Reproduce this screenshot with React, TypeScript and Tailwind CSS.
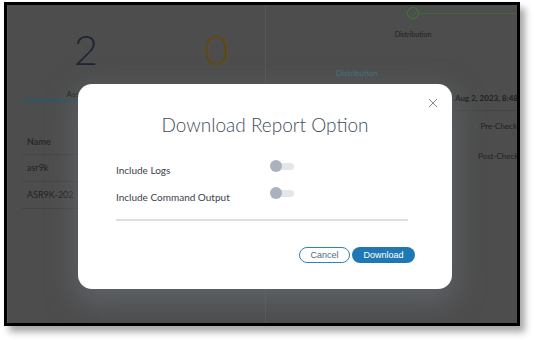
import React from "react";

const sans = { fontFamily: "Lato, 'Open Sans', sans-serif" };

function Toggle() {
  return (
    <div className="relative w-[24px] h-[12px] mb-[8px] flex items-center">
      <div className="absolute left-[4px] right-0 h-[7px] rounded-full bg-[#e3e6ea]" />
      <div className="relative w-[12px] h-[12px] rounded-full bg-[#aab3bd]" />
    </div>
  );
}

function CheckIcon({ size = 8, color = "#6fae4c" }: { size?: number; color?: string }) {
  return (
    <svg width={size} height={size} viewBox="0 0 24 24" fill="none" stroke={color} strokeWidth="2.6" strokeLinecap="round" strokeLinejoin="round">
      <path d="M20 6L9 17l-5-5" />
    </svg>
  );
}

export default function App() {
  return (
    <div className="w-[534px] h-[340px] bg-white" style={sans}>
      <div className="relative ml-[4px] mt-[2px] w-[516px] h-[324px] border-[3px] border-black bg-[#4d4d4d] shadow-[5px_6px_7px_rgba(0,0,0,0.35)] overflow-hidden flex">
        {/* Left panel */}
        <div className="w-[259px] shrink-0 border-l border-r border-[#575757] pl-[14px] flex flex-col overflow-hidden">
          <div className="flex mt-[17px] h-[79px]">
            <div className="w-[128px] shrink-0 flex flex-col items-center border-b-2 border-[#245a6b]">
              <div className="text-[42px] leading-none font-light text-[#1e2634] mt-[6px]">2</div>
              <div className="text-[8px] text-[#222] mt-[18px] mr-[16px]">Assets</div>
            </div>
            <div className="w-[1px] bg-[#454545] h-[78px]" />
            <div className="w-[134px] shrink-0 flex flex-col items-center">
              <div className="text-[42px] leading-none font-light text-[#634a0e] mt-[6px]">0</div>
            </div>
          </div>
          <div className="mt-[29px] flex flex-col">
            <div className="h-[25px] flex items-center pl-[5px] text-[9px] font-bold text-[#2a2a2a] border-b border-[#454545]">Name</div>
            <div className="h-[27px] flex items-center pl-[5px] text-[9px] text-[#222] border-b border-[#454545]">asr9k</div>
            <div className="h-[27px] flex items-center pl-[5px] text-[9px] text-[#222] border-b border-[#454545]">ASR9K-202</div>
          </div>
        </div>

        {/* Right panel */}
        <div className="flex-1 flex flex-col overflow-hidden">
          <div className="flex items-center pl-[141px] mt-[2px]">
            <div className="w-[12px] h-[12px] rounded-full border border-[#3f7a2c] flex items-center justify-center">
              <CheckIcon size={7} color="#3f7a2c" />
            </div>
            <div className="flex-1 h-px bg-[#3f6a30]" />
          </div>
          <div className="ml-[117px] w-[60px] text-center text-[7px] text-[#222] mt-[10px]">Distribution</div>
          <div className="ml-[18px] w-[146px] h-[24px] mt-[22px] flex items-center justify-center border-b-2 border-[#2c6077] text-[8px] text-[#46707f]">Distribution</div>
          <div className="ml-[179px] flex flex-col">
            <div className="h-[25px] flex items-center pl-[10px] text-[8px] font-bold text-[#1f1f1f] border-b border-[#454545] whitespace-nowrap">Aug 2, 2023, 8:48:</div>
            <div className="h-[30px] flex items-center gap-[3px] pl-[30px] text-[8px] text-[#222] whitespace-nowrap">
              <CheckIcon /> Pre-Check
            </div>
            <div className="h-[30px] flex items-center gap-[3px] pl-[30px] text-[8px] text-[#222] whitespace-nowrap">
              <CheckIcon /> Post-Check
            </div>
          </div>
        </div>

        {/* Modal */}
        <div className="absolute left-[71px] top-[79px] w-[374px] h-[205px] rounded-[14px] bg-white shadow-[0_10px_28px_4px_rgba(105,112,120,0.6)] flex flex-col">
          <button type="button" className="absolute top-[14px] right-[14px] w-[10px] h-[10px] flex items-center justify-center text-[#8a8a8a]" aria-label="Close">
            <svg width="10" height="10" viewBox="0 0 10 10" fill="none" stroke="currentColor" strokeWidth="1">
              <path d="M1 1l8 8M9 1l-8 8" />
            </svg>
          </button>
          <div className="mt-[29px] h-[24px] leading-[24px] text-center text-[19px] text-[#434c59]" style={{ fontWeight: 300 }}>Download Report Option</div>
          <div className="mt-[23px] pl-[38px] flex flex-col">
            <div className="h-[20px] flex items-center">
              <div className="w-[154px] text-[10px] text-[#39414b]">Include Logs</div>
              <Toggle />
            </div>
            <div className="h-[20px] mt-[7px] flex items-center">
              <div className="w-[154px] text-[10px] text-[#39414b]">Include Command Output</div>
              <Toggle />
            </div>
          </div>
          <div className="ml-[38px] w-[292px] h-[2px] bg-[#dedede] mt-[12px]" />
          <div className="mt-[26px] pr-[37px] flex justify-end gap-[2px]" style={{ fontFamily: "'Liberation Sans', Arial, sans-serif" }}>
            <button type="button" className="w-[51px] h-[16px] rounded-full border border-[#2f82c0] text-[9px] text-[#4f6b82] leading-none">Cancel</button>
            <button type="button" className="w-[63px] h-[16px] rounded-full bg-[#1f78b4] text-[9px] text-white leading-none">Download</button>
          </div>
        </div>
      </div>
    </div>
  );
}
